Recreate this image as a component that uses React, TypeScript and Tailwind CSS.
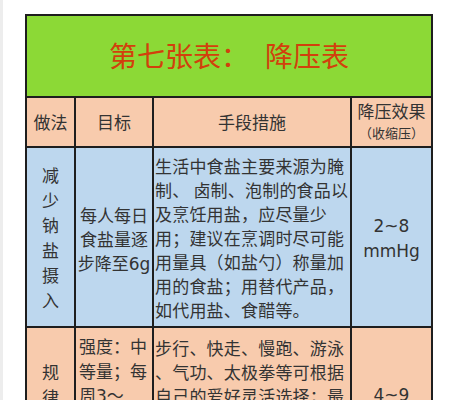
import React from 'react';

const cjk = { fontFamily: '"Noto Sans CJK SC", "Noto Sans", sans-serif' };
const latin = { fontFamily: '"DejaVu Sans", "Noto Sans CJK SC", sans-serif' };

const Lines: React.FC<{ lines: string[]; className?: string }> = ({ lines, className }) => (
  <div className={className}>
    {lines.map((l, i) => (
      <div key={i} className="whitespace-pre">
        {l}
      </div>
    ))}
  </div>
);

const App: React.FC = () => {
  return (
    <div
      className="w-[458px] h-[400px] overflow-hidden bg-white border-l-[3px] border-[#ededed] text-[#333333]"
      style={cjk}
    >
      <div className="mt-[14px] ml-[22px] w-[408px] bg-[#1e1e1e] p-[2px] grid grid-cols-[47px_76px_196px_79px] grid-rows-[80px_48px_178px_120px] gap-[2px]">
        {/* title */}
        <div className="col-span-4 bg-[#8cd936] flex items-center justify-center text-[28px] text-[#d2400c] leading-none pb-[2px]">
          <span>第七张表：</span>
          <span className="ml-[16px]">降压表</span>
        </div>

        {/* header */}
        <div className="bg-[#f8cbad] flex items-center justify-center text-[17px]">做法</div>
        <div className="bg-[#f8cbad] flex items-center justify-center text-[17px]">目标</div>
        <div className="bg-[#f8cbad] flex items-center justify-center text-[17px]">手段措施</div>
        <div className="bg-[#f8cbad] flex flex-col items-center justify-center">
          <div className="text-[17px] leading-[22px]">降压效果</div>
          <div className="text-[13px] leading-[22px]">（收缩压）</div>
        </div>

        {/* row 1 */}
        <div className="bg-[#bdd7ee] flex items-center justify-center text-[17px] leading-[25px] text-center">
          <Lines lines={['减', '少', '钠', '盐', '摄', '入']} />
        </div>
        <div className="bg-[#bdd7ee] flex items-center justify-center text-[17px] leading-[24px] text-center pt-[5px]">
          <div>
            <div>每人每日</div>
            <div>食盐量逐</div>
            <div>
              步降至<span style={latin}>6g</span>
            </div>
          </div>
        </div>
        <div className="bg-[#bdd7ee] pt-[6px] pl-[1px] text-[17px] leading-[24px] tracking-[0.2px]">
          <Lines
            lines={[
              '生活中食盐主要来源为腌',
              '制、 卤制、泡制的食品以',
              '及烹饪用盐，应尽量少',
              '用；建议在烹调时尽可能',
              '用量具（如盐勺）称量加',
              '用的食盐；用替代产品，',
              '如代用盐、食醋等。',
            ]}
          />
        </div>
        <div className="bg-[#bdd7ee] flex flex-col items-center justify-center text-[17px] leading-[25px] pt-[4px]" style={latin}>
          <div>2~8</div>
          <div>mmHg</div>
        </div>

        {/* row 2 */}
        <div className="bg-[#f8cbad] pt-[31px] text-[17px] leading-[25px] text-center">
          <Lines lines={['规', '律']} />
        </div>
        <div className="bg-[#f8cbad] pt-[6px] pl-[3px] text-[17px] leading-[24.5px]">
          <div>强度：中</div>
          <div>等量；每</div>
          <div>
            周<span style={latin}>3</span>～
          </div>
        </div>
        <div className="bg-[#f8cbad] pt-[8px] pl-[1px] text-[17px] leading-[24px] tracking-[0.2px]">
          <Lines
            lines={[
              '步行、快走、慢跑、游泳',
              '、气功、太极拳等可根据',
              '自己的爱好灵活选择；最',
            ]}
          />
        </div>
        <div className="bg-[#f8cbad] pt-[55px] text-[17px] leading-[25px] text-center" style={latin}>
          4~9
        </div>
      </div>
    </div>
  );
};

export default App;
